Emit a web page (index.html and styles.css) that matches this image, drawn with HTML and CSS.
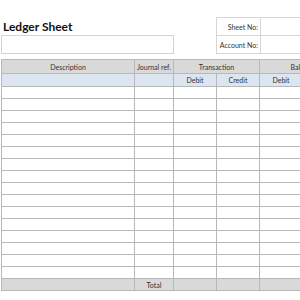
FILE: index.html
```html
<!DOCTYPE html>
<html>
<head>
<meta charset="utf-8">
<link rel="stylesheet" href="styles.css">
</head>
<body>
<div class="page">
  <div class="top">
    <div class="title-block">
      <h1 class="title">Ledger Sheet</h1>
      <div class="title-box"></div>
    </div>
    <table class="info">
      <tr><td class="lbl">Sheet No:</td><td class="val"></td></tr>
      <tr><td class="lbl">Account No:</td><td class="val"></td></tr>
    </table>
  </div>
  <table class="ledger">
    <colgroup>
      <col class="c-desc"><col class="c-ref"><col class="c-amt"><col class="c-amt"><col class="c-amt"><col class="c-amt">
    </colgroup>
    <thead>
      <tr class="h1">
        <th>Description</th><th>Journal ref.</th><th colspan="2">Transaction</th><th colspan="2">Balance</th>
      </tr>
      <tr class="h2">
        <th></th><th></th><th>Debit</th><th>Credit</th><th>Debit</th><th>Credit</th>
      </tr>
    </thead>
    <tbody>
      <tr><td></td><td></td><td></td><td></td><td></td><td></td></tr>
      <tr><td></td><td></td><td></td><td></td><td></td><td></td></tr>
      <tr><td></td><td></td><td></td><td></td><td></td><td></td></tr>
      <tr><td></td><td></td><td></td><td></td><td></td><td></td></tr>
      <tr><td></td><td></td><td></td><td></td><td></td><td></td></tr>
      <tr><td></td><td></td><td></td><td></td><td></td><td></td></tr>
      <tr><td></td><td></td><td></td><td></td><td></td><td></td></tr>
      <tr><td></td><td></td><td></td><td></td><td></td><td></td></tr>
      <tr><td></td><td></td><td></td><td></td><td></td><td></td></tr>
      <tr><td></td><td></td><td></td><td></td><td></td><td></td></tr>
      <tr><td></td><td></td><td></td><td></td><td></td><td></td></tr>
      <tr><td></td><td></td><td></td><td></td><td></td><td></td></tr>
      <tr><td></td><td></td><td></td><td></td><td></td><td></td></tr>
      <tr><td></td><td></td><td></td><td></td><td></td><td></td></tr>
      <tr><td></td><td></td><td></td><td></td><td></td><td></td></tr>
      <tr><td></td><td></td><td></td><td></td><td></td><td></td></tr>
    </tbody>
    <tfoot>
      <tr class="total"><td></td><td>Total</td><td></td><td></td><td></td><td></td></tr>
    </tfoot>
  </table>
</div>
</body>
</html>
```
FILE: styles.css
```css
html, body {
  margin: 0;
  padding: 0;
  background: #ffffff;
  overflow: hidden;
}
body {
  width: 300px;
  height: 300px;
  font-family: Lato, "Open Sans", sans-serif;
  color: #222;
}
.page {
  width: 300px;
  overflow: hidden;
}
.top {
  display: flex;
  align-items: flex-start;
  padding-top: 17px;
  height: 37px;
}
.title-block {
  flex: none;
  width: 173px;
  margin-left: 1px;
}
.title {
  margin: 0;
  padding: 2px 0 0 2px;
  height: 16px;
  font-size: 12px;
  font-weight: 700;
  line-height: 15px;
  color: #111;
}
.title-box {
  height: 17px;
  border: 1px solid #d4d4d4;
}
.info {
  flex: none;
  margin-left: 42px;
  border-collapse: collapse;
  table-layout: fixed;
  width: 130px;
}
.info td {
  border: 1px solid #d6d6d6;
  height: 17px;
  padding: 0 2px 0 0;
  font-size: 7px;
  color: #333;
}
.info .lbl {
  width: 41px;
  text-align: right;
}
.ledger {
  margin-top: 5px;
  margin-left: 1px;
  border-collapse: collapse;
  table-layout: fixed;
  width: 344px;
}
.c-desc { width: 133px; }
.c-ref { width: 39px; }
.c-amt { width: 43px; }
.ledger th, .ledger td {
  border: 1px solid #b8b8b8;
  padding: 0;
  font-size: 7px;
  font-weight: 400;
  color: #333;
  text-align: center;
  overflow: hidden;
  white-space: nowrap;
}
.ledger .h1 th {
  background: #d9d9d9;
  height: 13px;
}
.ledger .h2 th {
  background: #dce6f1;
  height: 12px;
}
.ledger tbody td {
  height: 11px;
}
.ledger .total td {
  background: #d9d9d9;
  height: 11px;
  color: #333;
}
```
